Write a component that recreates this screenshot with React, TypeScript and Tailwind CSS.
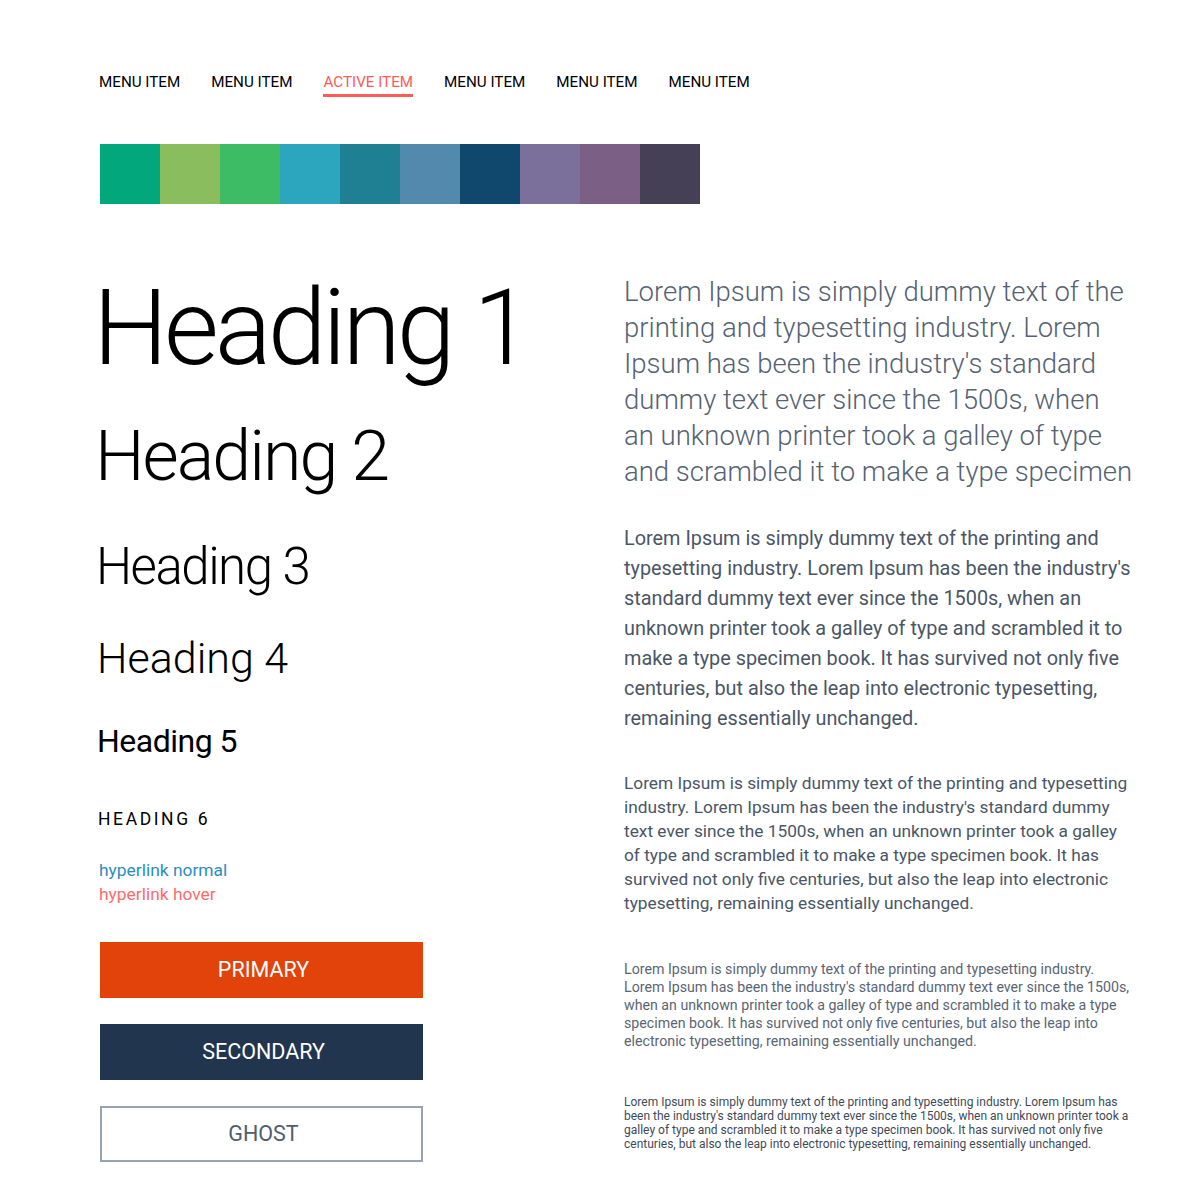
import React from "react";

const menu = ["MENU ITEM", "MENU ITEM", "ACTIVE ITEM", "MENU ITEM", "MENU ITEM", "MENU ITEM"];

const swatches = [
  "bg-[#02a87b]",
  "bg-[#89bd5d]",
  "bg-[#3dbb65]",
  "bg-[#2ca5be]",
  "bg-[#1f8094]",
  "bg-[#5289ad]",
  "bg-[#0f486c]",
  "bg-[#7b6f9b]",
  "bg-[#7b5f85]",
  "bg-[#454055]",
];

const lorem =
  "Lorem Ipsum is simply dummy text of the printing and typesetting industry. Lorem Ipsum has been the industry's standard dummy text ever since the 1500s, when an unknown printer took a galley of type and scrambled it to make a type specimen book. It has survived not only five centuries, but also the leap into electronic typesetting, remaining essentially unchanged.";

const lead =
  "Lorem Ipsum is simply dummy text of the printing and typesetting industry. Lorem Ipsum has been the industry's standard dummy text ever since the 1500s, when an unknown printer took a galley of type and scrambled it to make a type specimen";

export default function App() {
  return (
    <div className="w-[1200px] h-[1200px] bg-white font-['Roboto',sans-serif] text-black overflow-hidden">
      <div className="pl-[99px] pt-[72px]">
        <nav className="flex gap-[31px] text-[15.2px] leading-[20px]">
          {menu.map((m, i) =>
            i === 2 ? (
              <a key={i} className="flex flex-col text-[#ff5a5a]">
                <span>{m}</span>
                <span className="mt-[2px] h-[3px] bg-[#ff5a5a]" />
              </a>
            ) : (
              <a key={i} className="text-black">
                {m}
              </a>
            )
          )}
        </nav>

        <div className="mt-[47px] ml-px flex">
          {swatches.map((c, i) => (
            <div key={i} className={`w-[60px] h-[60px] ${c}`} />
          ))}
        </div>
      </div>

      <div className="flex mt-[71px]">
        <div className="w-[524px] pl-[95px] flex flex-col whitespace-nowrap">
          <h1 className="-ml-[2px] text-[106px] leading-none font-light tracking-[-4px]">Heading 1</h1>
          <h2 className="mt-[40px] text-[70px] leading-none font-light tracking-[-2px]">Heading 2</h2>
          <h3 className="mt-[50px] ml-[1px] text-[51px] leading-none font-light tracking-[-1.5px]">Heading 3</h3>
          <h4 className="mt-[45px] ml-[2px] text-[43px] leading-none font-light">Heading 4</h4>
          <h5 className="mt-[45px] ml-[2px] text-[32px] leading-none font-normal tracking-[-0.5px]">Heading 5</h5>
          <h6 className="mt-[50px] ml-[3px] text-[17.5px] leading-[24px] font-normal tracking-[2.6px]">HEADING 6</h6>
          <div className="mt-[27px] ml-[4px] flex flex-col text-[17.4px] leading-[24px]">
            <a className="text-[#2b8dbf]">hyperlink normal</a>
            <a className="text-[#ff6b6b]">hyperlink hover</a>
          </div>
          <div className="mt-[36px] ml-[5px] flex flex-col gap-[26px] w-[323px]">
            <button className="h-[56px] pl-[4px] bg-[#e2430a] text-white text-[21.5px]">PRIMARY</button>
            <button className="h-[56px] pl-[4px] bg-[#21354f] text-white text-[21.5px]">SECONDARY</button>
            <button className="h-[56px] pl-[4px] border-2 border-[#97a3b1] text-[#4f5d6e] text-[21.5px]">GHOST</button>
          </div>
        </div>

        <div className="w-[512px] ml-[100px] -mt-px flex flex-col text-[#556272]">
          <p className="text-[27.5px] leading-[36px] font-light">{lead}</p>
          <p className="mt-[34px] text-[19.85px] leading-[30px] text-[#4a5666]">{lorem}</p>
          <p className="mt-[37px] text-[17.3px] leading-[24px] text-[#4a5666]">{lorem}</p>
          <p className="mt-[45px] text-[14.2px] leading-[18px] text-[#5a6574]">{lorem}</p>
          <p className="mt-[45px] text-[12px] leading-[14px] text-[#3f4a58]">{lorem}</p>
        </div>
      </div>
    </div>
  );
}
